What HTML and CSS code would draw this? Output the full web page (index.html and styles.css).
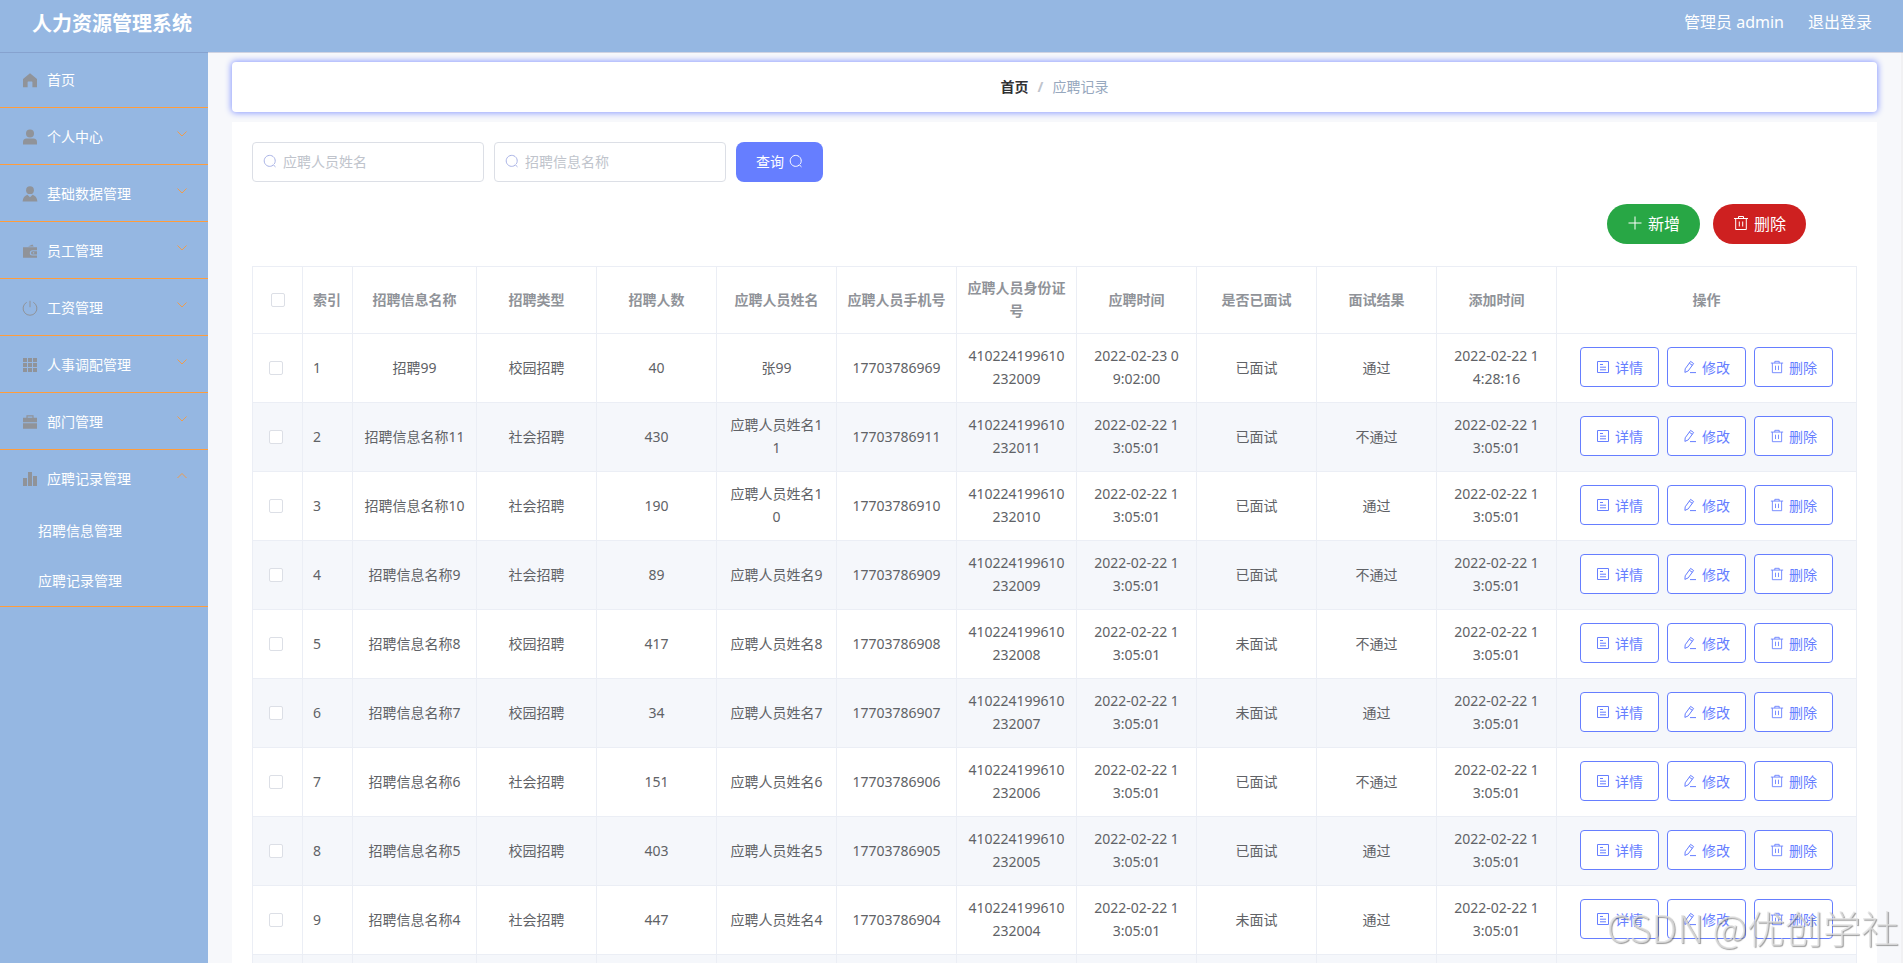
FILE: index.html
```
<!DOCTYPE html>
<html lang="zh-CN">
<head>
    <meta charset="UTF-8">
    <meta name="viewport" content="width=device-width, initial-scale=1.0">
    <title>人力资源管理系统</title>
    <link rel="stylesheet" href="styles.css">
</head>
<body>

<!-- Icon set -->
<svg class="sprite" aria-hidden="true">
    <symbol id="i-home" viewBox="0 0 16 16"><path d="M8 1.2 15 7v8.2h-4.6V10a.6.6 0 0 0-.6-.6H6.2a.6.6 0 0 0-.6.6v5.2H1V7z"/></symbol>
    <symbol id="i-user" viewBox="0 0 16 16"><circle cx="8" cy="4.4" r="4"/><path d="M1 15.4v-2.2A3.6 3.6 0 0 1 4.6 9.600h6.800A3.600 3.600 0 0 1 15 13.200v2.200z"/></symbol>
    <symbol id="i-custom" viewBox="0 0 16 16"><circle cx="8" cy="4.200" r="3.900"/><path d="M.6 15.400C.9 11.800 2.600 9.600 5.400 8.700L8 11.200l2.600-2.500c2.800.9 4.500 3.100 4.800 6.700z"/></symbol>
    <symbol id="i-wallet" viewBox="0 0 16 16"><path d="M6 3.400 10.400 1.500l1.300 1.900zM1 4.200h14v3h-4.500a2.700 2.700 0 0 0 0 5.400H15v2.200H1z"/><path d="M10.600 8.300H15v3.200h-4.400a1.600 1.600 0 0 1 0-3.200zm.3 1v1.200h1.300V9.300z"/></symbol>
    <symbol id="i-power" viewBox="0 0 16 16"><path class="line" d="M8 .8v6.400M4.700 2.300a6.900 6.900 0 1 0 6.600 0"/></symbol>
    <symbol id="i-grid" viewBox="0 0 16 16"><path d="M1 1h4v4H1zm5 0h4v4H6zm5 0h4v4h-4zM1 6h4v4H1zm5 0h4v4H6zm5 0h4v4h-4zM1 11h4v4H1zm5 0h4v4H6zm5 0h4v4h-4z"/></symbol>
    <symbol id="i-case" viewBox="0 0 16 16"><path d="M4.400 3.800V1.200h7.200v2.600H15v4.400H1V3.800zm1.200 0h4.800V2.400H5.600zM1 9.200h14v5.600H1z"/></symbol>
    <symbol id="i-data" viewBox="0 0 16 16"><path d="M1 7h4v8H1zm5-6h4v14H6zm5 4h4v10h-4z"/></symbol>
    <symbol id="i-down" viewBox="0 0 12 12"><path class="line" d="m1.500 3.500 4.500 4.500 4.500-4.500"/></symbol>
    <symbol id="i-up" viewBox="0 0 12 12"><path class="line" d="m1.500 8 4.500-4.500L10.500 8"/></symbol>
    <symbol id="i-search" viewBox="0 0 14 14"><path class="line" d="M10.100 11.200a5.500 5.500 0 1 1 1.200-1.300M9.800 10.300l2.700 2.600"/></symbol>
    <symbol id="i-plus" viewBox="0 0 16 16"><path class="line" d="M8 1.500v13M1.500 8h13"/></symbol>
    <symbol id="i-trash" viewBox="0 0 16 16"><path class="line" d="M1 3.500h14M5.500 3.500v-2h5v2M2.700 3.500v11h10.600v-11M6.300 6.500v5M9.700 6.500v5"/></symbol>
    <symbol id="i-doc" viewBox="0 0 14 14"><path class="line" d="M1.500 1.500h11v11h-11zM4 4.500h3M4 7.200h6M4 9.800h6"/></symbol>
    <symbol id="i-edit" viewBox="0 0 14 14"><path class="line" d="M2.200 8.800 7.600 1.400l3 2.100-5.400 7.400-3.300 1.500zM6.300 3.200l3 2.100M7 12.600h6"/></symbol>
</svg>

<header class="header">
    <h1 class="title">人力资源管理系统</h1>
    <div class="account">
        <span>管理员 admin</span>
        <a href="#">退出登录</a>
    </div>
</header>

<div class="layout">
    <nav class="sidebar">
        <ul class="menu">
            <li><a href="#"><svg class="icon"><use href="#i-home"/></svg>首页</a></li>
            <li><a href="#"><svg class="icon"><use href="#i-user"/></svg>个人中心<svg class="arrow"><use href="#i-down"/></svg></a></li>
            <li><a href="#"><svg class="icon"><use href="#i-custom"/></svg>基础数据管理<svg class="arrow"><use href="#i-down"/></svg></a></li>
            <li><a href="#"><svg class="icon"><use href="#i-wallet"/></svg>员工管理<svg class="arrow"><use href="#i-down"/></svg></a></li>
            <li><a href="#"><svg class="icon"><use href="#i-power"/></svg>工资管理<svg class="arrow"><use href="#i-down"/></svg></a></li>
            <li><a href="#"><svg class="icon"><use href="#i-grid"/></svg>人事调配管理<svg class="arrow"><use href="#i-down"/></svg></a></li>
            <li><a href="#"><svg class="icon"><use href="#i-case"/></svg>部门管理<svg class="arrow"><use href="#i-down"/></svg></a></li>
            <li>
                <a href="#"><svg class="icon"><use href="#i-data"/></svg>应聘记录管理<svg class="arrow"><use href="#i-up"/></svg></a>
                <ul class="submenu">
                    <li><a href="#">招聘信息管理</a></li>
                    <li><a href="#">应聘记录管理</a></li>
                </ul>
            </li>
        </ul>
    </nav>

    <main class="main">
        <div class="breadcrumb">
            <a href="#">首页</a>
            <span class="separator">/</span>
            <span class="current">应聘记录</span>
        </div>

        <section class="panel">
            <form class="search">
                <div class="field">
                    <svg><use href="#i-search"/></svg>
                    <input type="text" placeholder="应聘人员姓名" aria-label="应聘人员姓名">
                </div>
                <div class="field">
                    <svg><use href="#i-search"/></svg>
                    <input type="text" placeholder="招聘信息名称" aria-label="招聘信息名称">
                </div>
                <button type="button" class="query">查询<svg><use href="#i-search"/></svg></button>
            </form>

            <div class="actions">
                <button type="button" class="add"><svg><use href="#i-plus"/></svg>新增</button>
                <button type="button" class="remove"><svg><use href="#i-trash"/></svg>删除</button>
            </div>

            <table class="table">
                <colgroup>
                    <col class="w-small"><col class="w-small"><col class="w-name">
                    <col><col><col><col><col><col><col><col><col>
                    <col class="w-action">
                </colgroup>
                <thead>
                    <tr>
                        <th class="check"><input type="checkbox" aria-label="全选"></th>
                        <th class="index">索引</th>
                        <th>招聘信息名称</th>
                        <th>招聘类型</th>
                        <th>招聘人数</th>
                        <th>应聘人员姓名</th>
                        <th>应聘人员手机号</th>
                        <th>应聘人员身份证号</th>
                        <th>应聘时间</th>
                        <th>是否已面试</th>
                        <th>面试结果</th>
                        <th>添加时间</th>
                        <th>操作</th>
                    </tr>
                </thead>
                <tbody id="rows"></tbody>
            </table>
        </section>
    </main>
</div>

<div class="watermark">CSDN @优创学社</div>

<script>
    const time = "2022-02-22 13:05:01";

    // name, type, count, person, phone, id card, apply time, interviewed, result, add time
    const records = [
        ["招聘99", "校园招聘", 40, "张99", "17703786969", "410224199610232009", "2022-02-23 09:02:00", "已面试", "通过", "2022-02-22 14:28:16"],
        ["招聘信息名称11", "社会招聘", 430, "应聘人员姓名11", "17703786911", "410224199610232011", time, "已面试", "不通过", time],
        ["招聘信息名称10", "社会招聘", 190, "应聘人员姓名10", "17703786910", "410224199610232010", time, "已面试", "通过", time],
        ["招聘信息名称9", "社会招聘", 89, "应聘人员姓名9", "17703786909", "410224199610232009", time, "已面试", "不通过", time],
        ["招聘信息名称8", "校园招聘", 417, "应聘人员姓名8", "17703786908", "410224199610232008", time, "未面试", "不通过", time],
        ["招聘信息名称7", "校园招聘", 34, "应聘人员姓名7", "17703786907", "410224199610232007", time, "未面试", "通过", time],
        ["招聘信息名称6", "社会招聘", 151, "应聘人员姓名6", "17703786906", "410224199610232006", time, "已面试", "不通过", time],
        ["招聘信息名称5", "校园招聘", 403, "应聘人员姓名5", "17703786905", "410224199610232005", time, "已面试", "通过", time],
        ["招聘信息名称4", "社会招聘", 447, "应聘人员姓名4", "17703786904", "410224199610232004", time, "未面试", "通过", time],
        ["", "", "", "", "", "", "", "", "", ""]
    ];
    const dateColumns = [6, 9];

    function button(icon, text) {
        return `<button type="button"><svg><use href="#${icon}"/></svg>${text}</button>`;
    }

    document.getElementById("rows").innerHTML = records.map((record, i) => {
        const cells = record.map((value, c) =>
            `<td${dateColumns.includes(c) ? ' class="date"' : ""}>${value}</td>`
        ).join("");
        return `<tr>
            <td class="check"><input type="checkbox" aria-label="选择第${i + 1}行"></td>
            <td class="index">${i + 1}</td>
            ${cells}
            <td><div class="row-actions">${button("i-doc", "详情")}${button("i-edit", "修改")}${button("i-trash", "删除")}</div></td>
        </tr>`;
    }).join("");
</script>

</body>
</html>
```
FILE: styles.css
```
* {
    box-sizing: border-box;
}
body {
    margin: 0;
    height: 100vh;
    padding-top: 51px;
    overflow: hidden;
    background-color: #f7f8fb;
    color: #606266;
    font-family: "Noto Sans", "Noto Sans CJK SC", sans-serif;
    font-size: 14px;
}
a {
    color: inherit;
    text-decoration: none;
}
ul {
    margin: 0;
    padding: 0;
    list-style: none;
}
button, input {
    font: inherit;
}
button {
    display: inline-flex;
    align-items: center;
    justify-content: center;
    gap: 5px;
    height: 40px;
    padding: 0 20px 2px;
    border: none;
    color: white;
    cursor: pointer;
}
svg {
    flex: none;
    width: 14px;
    height: 14px;
    fill: currentColor;
}
.sprite {
    position: absolute;
    width: 0;
    height: 0;
}
.line {
    fill: none;
    stroke: currentColor;
    stroke-width: 1;
}

/* Header */
.header {
    position: fixed;
    top: 0;
    left: 0;
    right: 0;
    z-index: 2;
    display: flex;
    justify-content: space-between;
    align-items: center;
    height: 53px;
    padding: 0 31px 10px 32px;
    background-color: #95b7e2;
    background-clip: padding-box;
    border-bottom: 1px solid rgba(90, 100, 150, 0.25);
    color: white;
}
.title {
    margin: 0;
    padding-top: 5px;
    font-size: 20px;
    line-height: 30px;
}
.account {
    display: flex;
    gap: 24px;
    font-size: 16px;
}

/* Sidebar */
.layout {
    display: grid;
    grid-template-columns: 208px 1fr;
    height: 100%;
}
.sidebar {
    background-color: #95b7e2;
    color: white;
}
.menu > li {
    border-bottom: 1px solid #ff9d3c;
}
.menu > li > a {
    display: flex;
    align-items: center;
    height: 56px;
    padding: 0 20px 0 22px;
}
.icon {
    width: 16px;
    height: 16px;
    margin: 2px 9px 0 0;
    color: #909399;
}
.arrow {
    width: 12px;
    height: 12px;
    margin: 0 0 4px auto;
    color: #ee9c4e;
}
.submenu a {
    display: flex;
    align-items: center;
    height: 50px;
    padding: 0 0 2px 38px;
}

/* Content */
.main {
    padding: 11px 24px 0;
    border-right: 2px solid #f1f1f3;
    overflow: auto;
    scrollbar-width: none;
}
.breadcrumb {
    display: flex;
    justify-content: center;
    align-items: center;
    gap: 9px;
    height: 50px;
    padding-bottom: 2px;
    margin-bottom: 10px;
    background-color: white;
    border-radius: 4px;
    box-shadow: 0 0 6px 1px #8c9cff;
}
.breadcrumb a {
    color: #303133;
    font-weight: bold;
}
.separator {
    color: #c0c4cc;
    font-weight: bold;
}
.current {
    color: #97a8be;
}
.panel {
    padding: 20px;
    background-color: white;
}
.search {
    display: flex;
    gap: 10px;
}
.field {
    display: flex;
    align-items: center;
    gap: 6px;
    width: 232px;
    height: 40px;
    padding: 0 10px 2px;
    border: 1px solid #dcdfe6;
    border-radius: 4px;
    color: #a9b3e6;
}
.field input {
    flex: 1;
    min-width: 0;
    padding: 0;
    border: none;
    outline: none;
    background: none;
    color: #606266;
}
.field input::placeholder {
    color: #c0c4cc;
}
.query {
    border-radius: 8px;
    background-color: #667eff;
}
.actions {
    display: flex;
    justify-content: flex-end;
    gap: 13px;
    margin: 22px 0;
    padding-right: 51px;
}
.actions button {
    border-radius: 20px;
    font-size: 16px;
}
.actions svg {
    width: 16px;
    height: 16px;
}
.add {
    background-color: #28a745;
}
.remove {
    background-color: #ce2020;
}

/* Table */
.table {
    width: 100%;
    table-layout: fixed;
    border-collapse: separate;
    border-spacing: 0;
    border-top: 1px solid #ebeef5;
    border-left: 1px solid #ebeef5;
    line-height: 23px;
    text-align: center;
}
.table col {
    width: 120px;
}
.table .w-small {
    width: 50px;
}
.table .w-name {
    width: 124px;
}
.table .w-action {
    width: 300px;
}
.table th, .table td {
    padding: 9px 10px 11px;
    border-right: 1px solid #ebeef5;
    border-bottom: 1px solid #ebeef5;
    word-break: break-all;
}
.table th {
    color: #909399;
}
.table td {
    height: 69px;
}
.table .date {
    padding: 9px 14px 11px;
}
.table .index {
    text-align: left;
}
.table .check {
    padding: 0 0 0 16px;
    text-align: left;
}
.table th.check {
    padding-left: 18px;
}
.table tbody tr:nth-child(even) {
    background-color: #f5f7fb;
}
input[type="checkbox"] {
    display: block;
    appearance: none;
    width: 14px;
    height: 14px;
    margin: 0;
    border: 1px solid #dcdfe6;
    border-radius: 2px;
    background-color: white;
}
.row-actions {
    display: flex;
    justify-content: center;
    gap: 8px;
}
.row-actions button {
    padding: 0 15px;
    border: 1px solid #667eff;
    border-radius: 4px;
    background-color: white;
    color: #667eff;
}

.watermark {
    position: fixed;
    right: 4px;
    bottom: 11px;
    z-index: 3;
    color: rgba(225, 225, 225, 0.75);
    font-family: "Noto Sans CJK SC", sans-serif;
    font-size: 38px;
    font-weight: 300;
    line-height: 50px;
    text-shadow: 1px 1px 1px rgba(90, 90, 90, 0.6);
    pointer-events: none;
}
```
